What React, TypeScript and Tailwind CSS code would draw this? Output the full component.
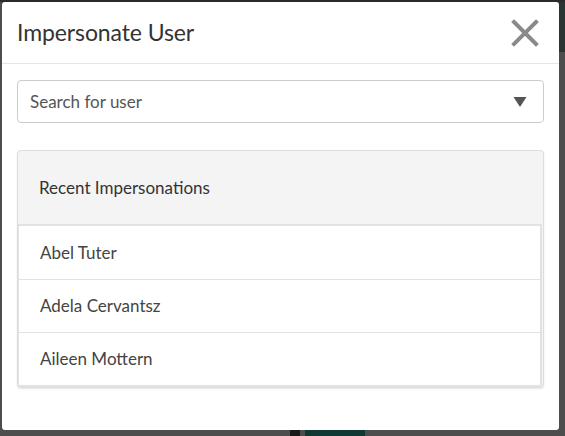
import React from "react";

export default function App() {
  const users = ["Abel Tuter", "Adela Cervantsz", "Aileen Mottern"];
  return (
    <div
      className="w-[565px] h-[436px] overflow-hidden bg-[#4d4d4d] border-t-2 border-[#2b2b2b] flex"
      style={{ fontFamily: "Lato, 'Open Sans', sans-serif" }}
    >
      <div className="pl-[2px] flex flex-col">
        <div className="w-[557px] h-[428px] bg-white rounded-[3px] flex flex-col shrink-0">
          <div className="flex items-center justify-between h-[62px] pl-[15px] pr-[20px] border-b border-[#e5e5e5]">
            <div className="text-[23px] text-[#333] tracking-[-0.1px]">Impersonate User</div>
            <svg width="28" height="28" viewBox="0 0 28 28" className="mt-[1px]">
              <path d="M3 3 L25 25 M25 3 L3 25" stroke="#8a8a8a" strokeWidth="4" strokeLinecap="square" />
            </svg>
          </div>
          <div className="px-[15px] pt-[16px]">
            <div className="h-[43px] border border-[#cccccc] rounded-[4px] flex items-center justify-between pl-[12px] pr-[16px]">
              <span className="text-[17px] text-[#555]">Search for user</span>
              <svg width="14" height="12" viewBox="0 0 14 12">
                <path d="M0.5 1 L13.5 1 L7 11 Z" fill="#555" />
              </svg>
            </div>
            <div className="mt-[27px] border border-[#dddddd] rounded-[4px] bg-[#f4f4f4] shadow-[0_1px_2px_rgba(0,0,0,0.1)]">
              <div className="h-[73px] flex items-center pl-[21px] text-[17px] text-[#333]">
                Recent Impersonations
              </div>
              <div className="mr-[1px] border-2 border-l border-[#e2e2e2] bg-white rounded-b-[3px]">
                {users.map((u, i) => (
                  <div
                    key={u}
                    className={`h-[53px] flex items-center pl-[21px] text-[17px] text-[#444] ${
                      i > 0 ? "border-t border-[#e2e2e2]" : ""
                    }`}
                  >
                    {u}
                  </div>
                ))}
              </div>
            </div>
          </div>
        </div>
        <div className="flex h-[6px] pl-[288px] gap-[5px]">
          <div className="w-[10px] bg-[#1a1a1a]" />
          <div className="w-[60px] bg-[#0f3a33]" />
        </div>
      </div>
      <div className="w-[6px] h-[50px] bg-[#2a3533]" />
    </div>
  );
}
